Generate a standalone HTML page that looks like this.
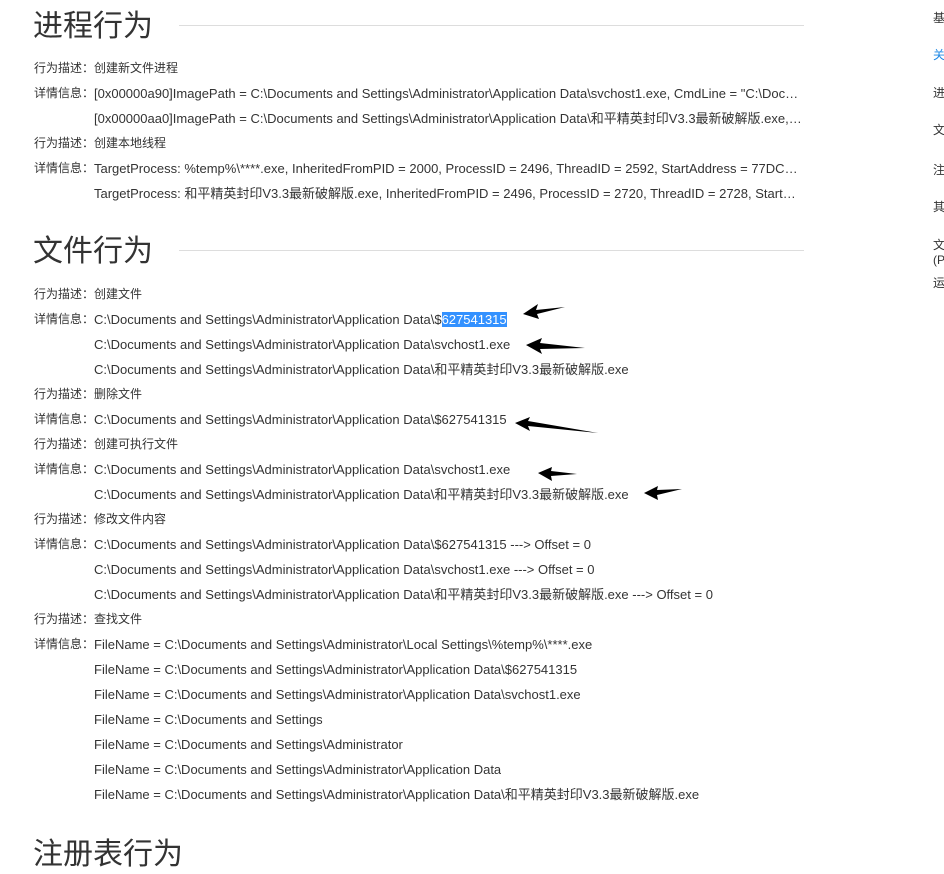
<!DOCTYPE html>
<html><head><meta charset="utf-8"><style>
body{margin:0;width:944px;height:841px;overflow:hidden;background:#fff;position:relative;font-family:"Liberation Sans","Noto Sans CJK SC",sans-serif;color:#333}
.h{position:absolute;left:33px;font-size:30px;line-height:38px;color:#333;font-weight:normal;white-space:nowrap}
.hl{position:absolute;left:179px;width:625px;height:1px;background:#ddd}
.r{position:absolute;left:34px;height:25px;line-height:25px;white-space:nowrap;font-size:12px}
.l{display:inline-block;width:60px;font-size:12px}
.v{display:inline-block;font-size:13px;max-width:709px;overflow:hidden;text-overflow:ellipsis;vertical-align:top}
.sel{background:#3391ff;color:#fff}
.s{position:absolute;left:933px;font-size:12px;color:#333;line-height:14px}
</style></head><body>
<div class="h" style="top:8px">进程行为</div><div class="hl" style="top:25px"></div>
<div class="r" style="top:56px"><span class="l">行为描述：</span>创建新文件进程</div>
<div class="r" style="top:81px"><span class="l">详情信息：</span><span class="v">[0x00000a90]ImagePath = C:\Documents and Settings\Administrator\Application Data\svchost1.exe, CmdLine = "C:\Documents and Settings"</span></div>
<div class="r" style="top:106px"><span class="l"></span><span class="v">[0x00000aa0]ImagePath = C:\Documents and Settings\Administrator\Application Data\和平精英封印V3.3最新破解版.exe, CmdLine = "C:\Documents"</span></div>
<div class="r" style="top:131px"><span class="l">行为描述：</span>创建本地线程</div>
<div class="r" style="top:156px"><span class="l">详情信息：</span><span class="v">TargetProcess: %temp%\****.exe, InheritedFromPID = 2000, ProcessID = 2496, ThreadID = 2592, StartAddress = 77DC8450, Parameter = 0</span></div>
<div class="r" style="top:181px"><span class="l"></span><span class="v">TargetProcess: 和平精英封印V3.3最新破解版.exe, InheritedFromPID = 2496, ProcessID = 2720, ThreadID = 2728, StartAddress = 77DC8450</span></div>

<div class="h" style="top:233px">文件行为</div><div class="hl" style="top:250px"></div>
<div class="r" style="top:282px"><span class="l">行为描述：</span>创建文件</div>
<div class="r" style="top:307px"><span class="l">详情信息：</span><span class="v">C:\Documents and Settings\Administrator\Application Data\$<span class="sel">627541315</span></span></div>
<div class="r" style="top:332px"><span class="l"></span><span class="v">C:\Documents and Settings\Administrator\Application Data\svchost1.exe</span></div>
<div class="r" style="top:357px"><span class="l"></span><span class="v">C:\Documents and Settings\Administrator\Application Data\和平精英封印V3.3最新破解版.exe</span></div>
<div class="r" style="top:382px"><span class="l">行为描述：</span>删除文件</div>
<div class="r" style="top:407px"><span class="l">详情信息：</span><span class="v">C:\Documents and Settings\Administrator\Application Data\$627541315</span></div>
<div class="r" style="top:432px"><span class="l">行为描述：</span>创建可执行文件</div>
<div class="r" style="top:457px"><span class="l">详情信息：</span><span class="v">C:\Documents and Settings\Administrator\Application Data\svchost1.exe</span></div>
<div class="r" style="top:482px"><span class="l"></span><span class="v">C:\Documents and Settings\Administrator\Application Data\和平精英封印V3.3最新破解版.exe</span></div>
<div class="r" style="top:507px"><span class="l">行为描述：</span>修改文件内容</div>
<div class="r" style="top:532px"><span class="l">详情信息：</span><span class="v">C:\Documents and Settings\Administrator\Application Data\$627541315 ---&gt; Offset = 0</span></div>
<div class="r" style="top:557px"><span class="l"></span><span class="v">C:\Documents and Settings\Administrator\Application Data\svchost1.exe ---&gt; Offset = 0</span></div>
<div class="r" style="top:582px"><span class="l"></span><span class="v">C:\Documents and Settings\Administrator\Application Data\和平精英封印V3.3最新破解版.exe ---&gt; Offset = 0</span></div>
<div class="r" style="top:607px"><span class="l">行为描述：</span>查找文件</div>
<div class="r" style="top:632px"><span class="l">详情信息：</span><span class="v">FileName = C:\Documents and Settings\Administrator\Local Settings\%temp%\****.exe</span></div>
<div class="r" style="top:657px"><span class="l"></span><span class="v">FileName = C:\Documents and Settings\Administrator\Application Data\$627541315</span></div>
<div class="r" style="top:682px"><span class="l"></span><span class="v">FileName = C:\Documents and Settings\Administrator\Application Data\svchost1.exe</span></div>
<div class="r" style="top:707px"><span class="l"></span><span class="v">FileName = C:\Documents and Settings</span></div>
<div class="r" style="top:732px"><span class="l"></span><span class="v">FileName = C:\Documents and Settings\Administrator</span></div>
<div class="r" style="top:757px"><span class="l"></span><span class="v">FileName = C:\Documents and Settings\Administrator\Application Data</span></div>
<div class="r" style="top:782px"><span class="l"></span><span class="v">FileName = C:\Documents and Settings\Administrator\Application Data\和平精英封印V3.3最新破解版.exe</span></div>

<div class="h" style="top:836px">注册表行为</div>

<div class="s" style="top:11px">基</div>
<div class="s" style="top:48px;color:#1e88e5">关</div>
<div class="s" style="top:86px">进</div>
<div class="s" style="top:123px">文</div>
<div class="s" style="top:163px">注</div>
<div class="s" style="top:200px">其</div>
<div class="s" style="top:238px">文</div>
<div class="s" style="top:253px">(P</div>
<div class="s" style="top:276px">运</div>

<svg width="944" height="841" style="position:absolute;left:0;top:0" xmlns="http://www.w3.org/2000/svg">
<g fill="#000">
<polygon points="523,314 538,304 536,310 565,307 537,314 539,319"/>
<polygon points="526,345 542,338 540,343 585,348 540,349 542,354"/>
<polygon points="515,423 530,417 528,421 598,433 528,426 530,431"/>
<polygon points="538,473 552,467 551,471 577,474 551,476 552,481"/>
<polygon points="644,493 658,486 657,490 682,489 657,495 658,500"/>
</g>
</svg>
</body></html>
